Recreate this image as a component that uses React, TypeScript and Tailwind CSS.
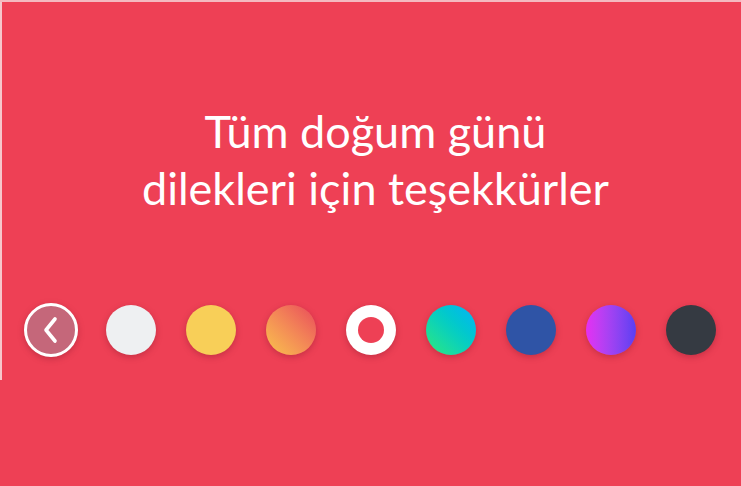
import React from "react";

export default function App() {
  return (
    <div className="w-[741px] h-[486px] bg-[#ee4055] border-t-2 border-[#f4b9c0] flex overflow-hidden">
      <div className="w-[2px] h-[378px] bg-[#f6c6cc] shrink-0" />
      <div className="flex-1 flex flex-col items-center -ml-[2px]">
        <div
          className="mt-[101px] text-white text-center text-[45px] leading-[57px] font-normal pl-[10px]"
          style={{ fontFamily: "Lato, 'Noto Sans', sans-serif" }}
        >
          <div>Tüm doğum günü</div>
          <div>dilekleri için teşekkürler</div>
        </div>
        <div className="mt-[86px] flex items-center justify-center gap-[30px]">
          <div className="w-[54px] h-[54px] -mx-[2px] rounded-full border-[3px] border-white bg-[#c5677a] flex items-center justify-center shadow-[0_2px_6px_rgba(120,20,40,0.35)]">
            <svg width="24" height="28" viewBox="0 0 24 28" fill="none">
              <path d="M16 3 L7 14 L16 25" stroke="white" strokeWidth="3.6" strokeLinecap="round" strokeLinejoin="round" />
            </svg>
          </div>
          <div className="w-[50px] h-[50px] rounded-full bg-[#eef0f2] shadow-[0_2px_6px_rgba(120,20,40,0.35)]" />
          <div className="w-[50px] h-[50px] rounded-full bg-[#f8cf58] shadow-[0_2px_6px_rgba(120,20,40,0.35)]" />
          <div className="w-[50px] h-[50px] rounded-full bg-gradient-to-tr from-[#f8c24a] to-[#e8455a] shadow-[0_2px_6px_rgba(120,20,40,0.35)]" />
          <div className="w-[50px] h-[50px] rounded-full bg-white flex items-center justify-center shadow-[0_2px_6px_rgba(120,20,40,0.35)]">
            <div className="w-[26px] h-[26px] rounded-full bg-[#ee4055]" />
          </div>
          <div className="w-[50px] h-[50px] rounded-full bg-gradient-to-tr from-[#2ee874] to-[#12b0f8] shadow-[0_2px_6px_rgba(120,20,40,0.35)]" />
          <div className="w-[50px] h-[50px] rounded-full bg-[#2f54a6] shadow-[0_2px_6px_rgba(120,20,40,0.35)]" />
          <div className="w-[50px] h-[50px] rounded-full bg-gradient-to-r from-[#e52ef2] to-[#5a3ef2] shadow-[0_2px_6px_rgba(120,20,40,0.35)]" />
          <div className="w-[50px] h-[50px] rounded-full bg-[#353a42] shadow-[0_2px_6px_rgba(120,20,40,0.35)]" />
        </div>
      </div>
    </div>
  );
}
